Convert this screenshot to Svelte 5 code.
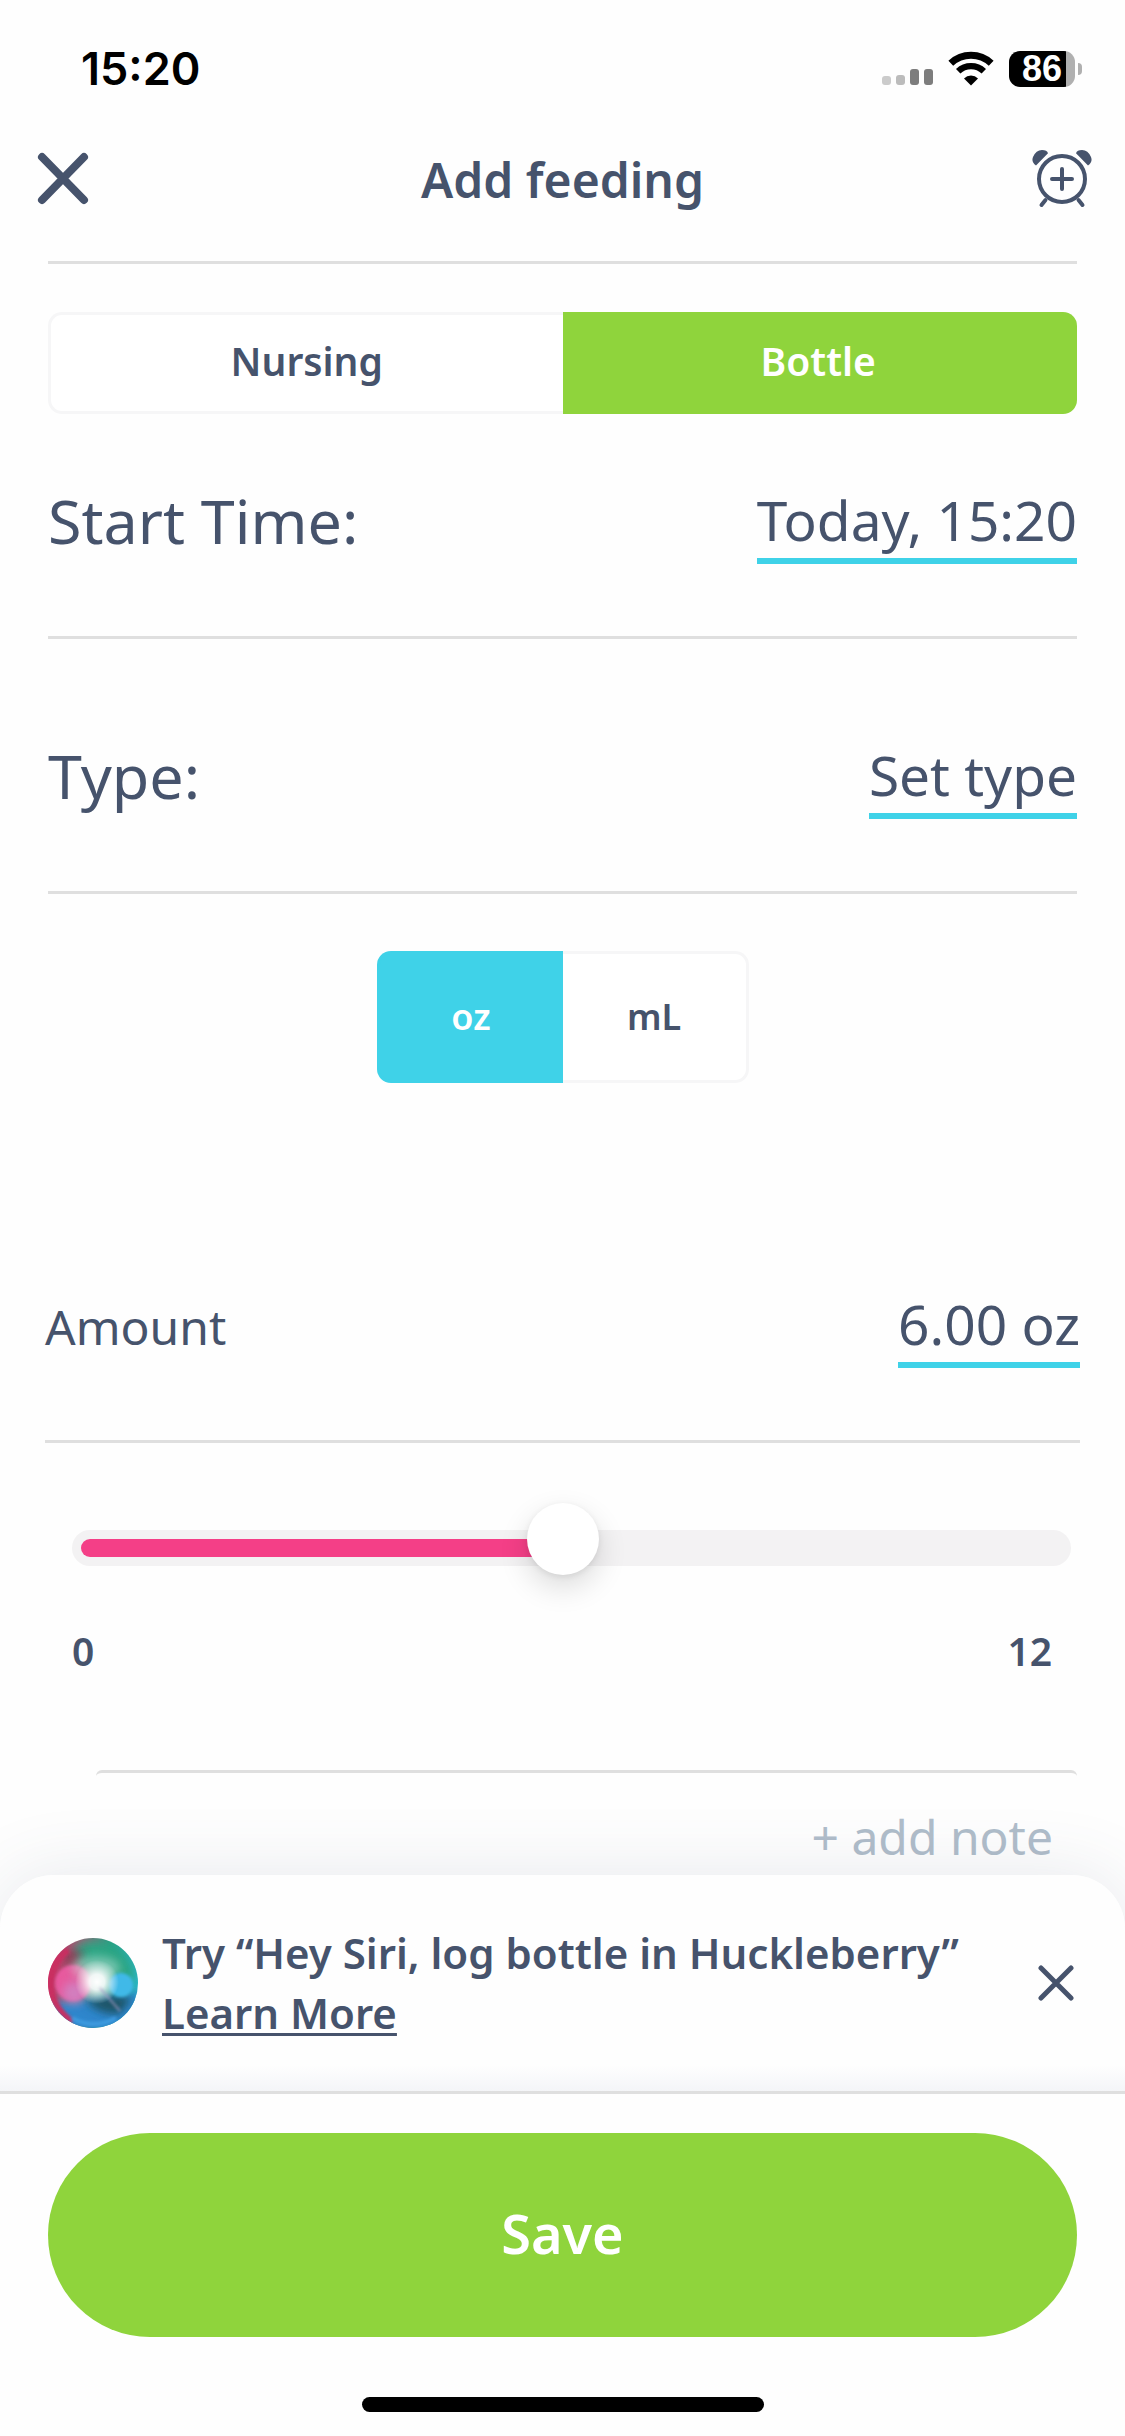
<script>
  let mode = $state('Bottle');
  let unit = $state('oz');
  let amount = $state(6);
  let siriOpen = $state(true);
  const max = 12;
</script>

<div class="screen">
  <div class="status">
    <span class="clock">15:20</span>
    <div class="indicators">
      <svg width="51" height="36" viewBox="0 0 51 36" aria-hidden="true">
        <rect x="0" y="25" width="9" height="9" rx="3" fill="#cbcbcb" />
        <rect x="14" y="24" width="9" height="10" rx="3" fill="#bcbcbc" />
        <rect x="28" y="18" width="9" height="16" rx="3" fill="#7d7d7d" />
        <rect x="42" y="18" width="9" height="16" rx="3" fill="#7d7d7d" />
      </svg>
      <svg class="wifi" width="46" height="36" viewBox="0 0 46 36" aria-hidden="true">
        <path d="M2.8 12.2A29.5 29.5 0 0 1 43.2 12.2" fill="none" stroke="#000" stroke-width="7" />
        <path d="M10.2 20.2A18.6 18.6 0 0 1 35.8 20.2" fill="none" stroke="#000" stroke-width="6.4" />
        <path d="M23 34.5L16 27.4A10 10 0 0 1 30 27.4Z" />
      </svg>
      <div class="battery">
        <span>86</span>
      </div>
      <i class="nub"></i>
    </div>
  </div>

  <header>
    <button class="icon" aria-label="Close">
      <svg width="60" height="58" viewBox="-5 0 60 58">
        <path d="M4 7L46 50M46 7L4 50" fill="none" stroke="#46536c" stroke-width="8" stroke-linecap="round" />
      </svg>
    </button>
    <h1>Add feeding</h1>
    <button class="icon" aria-label="Add reminder">
      <svg width="60" height="58" viewBox="0 0 60 58" fill="none" stroke="#46536c" stroke-width="4" stroke-linecap="round">
        <circle cx="30" cy="29" r="23" />
        <path d="M30 19V39M20 29H40" />
        <path d="M13.5 50L9.5 55M46.5 50L50.5 55" />
        <path d="M4 15.500Q-1 12 1 7Q4 0 10 0Q15 0 16 3.200ZM56 15.500Q61 12 59 7Q56 0 50 0Q45 0 44 3.200Z" fill="#46536c" stroke="none" />
      </svg>
    </button>
  </header>

  <main>
    <div class="segment mode">
      {#each ['Nursing', 'Bottle'] as name}
        <button class:on={mode === name} aria-pressed={mode === name} onclick={() => (mode = name)}>{name}</button>
      {/each}
    </div>

    <div class="row first">
      <span class="label">Start Time:</span>
      <button class="value">Today, 15:20</button>
    </div>
    <div class="row">
      <span class="label">Type:</span>
      <button class="value">Set type</button>
    </div>

    <div class="segment unit">
      {#each ['oz', 'mL'] as name}
        <button class:on={unit === name} aria-pressed={unit === name} onclick={() => (unit = name)}>{name}</button>
      {/each}
    </div>

    <section>
      <div class="amount">
        <label for="amount">Amount</label>
        <button class="value">{amount.toFixed(2)} {unit}</button>
      </div>
      <div class="slider">
        <div class="track"><div class="fill" style="width: {(amount / max) * 100}%"></div></div>
        <input id="amount" type="range" min="0" {max} step="0.25" bind:value={amount} />
      </div>
      <div class="scale"><span>0</span><span>{max}</span></div>
    </section>

    <div class="note">
      <button>+ add note</button>
    </div>
  </main>

  {#if siriOpen}
    <aside>
      <svg class="siri" width="90" height="90" viewBox="0 0 90 90" aria-hidden="true">
        <defs>
          <clipPath id="orb"><circle cx="45" cy="45" r="45" /></clipPath>
          <filter id="soft" x="-50%" y="-50%" width="200%" height="200%"><feGaussianBlur stdDeviation="4" /></filter>
          <filter id="fine" x="-50%" y="-50%" width="200%" height="200%"><feGaussianBlur stdDeviation="1.500" /></filter>
          <linearGradient id="rim" x1="0" y1="0.4" x2="1" y2="0.6">
            <stop offset="0" stop-color="#d42c66" />
            <stop offset="0.3" stop-color="#8c6a78" />
            <stop offset="0.6" stop-color="#27a083" />
            <stop offset="1" stop-color="#2cb6c4" />
          </linearGradient>
          <radialGradient id="glow">
            <stop offset="0" stop-color="#fff" />
            <stop offset="0.35" stop-color="#fff" stop-opacity="0.9" />
            <stop offset="1" stop-color="#fff" stop-opacity="0" />
          </radialGradient>
        </defs>
        <g clip-path="url(#orb)">
          <rect width="90" height="90" fill="url(#rim)" />
          <path d="M26 10Q48 -2 72 14Q88 30 84 42L52 38L28 22Z" fill="#2ba583" filter="url(#soft)" />
          <path d="M4 64Q22 64 45 60L94 54V94H10Z" fill="#2f86cc" filter="url(#soft)" />
          <path d="M38 64Q60 54 84 60L72 76Q54 78 38 64Z" fill="#1f5468" filter="url(#soft)" />
          <path d="M14 18Q24 8 38 16L20 28Z" fill="#8a3550" filter="url(#soft)" opacity="0.8" />
          <path d="M20 12Q-8 36 8 66Q14 76 24 84" fill="none" stroke="#c92d60" stroke-width="6" filter="url(#fine)" />
          <circle cx="25" cy="45" r="18" fill="#ee5ba4" filter="url(#fine)" opacity="0.9" />
          <circle cx="26" cy="55" r="11" fill="#cf86c6" filter="url(#soft)" opacity="0.8" />
          <ellipse cx="48" cy="30" rx="24" ry="12" fill="#cfe8e0" opacity="0.45" filter="url(#soft)" />
          <circle cx="73" cy="47" r="12" fill="#3fb9e8" filter="url(#fine)" />
          <circle cx="49" cy="44" r="22" fill="url(#glow)" />
          <path d="M52 50L72 73" stroke="#a79ac4" stroke-width="2" opacity="0.7" filter="url(#fine)" />
          <path d="M24 80Q45 92 68 80" fill="none" stroke="#3e9be0" stroke-width="4" filter="url(#fine)" />
        </g>
      </svg>
      <p>Try “Hey Siri, log bottle in Huckleberry”<br /><a href="#learn">Learn More</a></p>
      <button class="icon dismiss" aria-label="Dismiss" onclick={() => (siriOpen = false)}>
        <svg width="36" height="36" viewBox="0 0 36 36">
          <path d="M3 3L33 33M33 3L3 33" fill="none" stroke="#46536c" stroke-width="5" stroke-linecap="round" />
        </svg>
      </button>
    </aside>
  {/if}

  <footer>
    <button class="save">Save</button>
    <div class="home"></div>
  </footer>
</div>

<style>
  :global(body) {
    background: #fefefe;
  }
  .screen {
    min-height: 100vh;
    display: flex;
    flex-direction: column;
    overflow: hidden;
    background: #fefefe;
    color: #46536c;
    font-family: 'Noto Sans', sans-serif;
  }
  button {
    margin: 0;
    padding: 0;
    border: 0;
    background: none;
    color: inherit;
    font: inherit;
    cursor: pointer;
  }
  svg {
    display: block;
  }
  .status {
    display: flex;
    justify-content: space-between;
    align-items: center;
    padding: 39px 43px 39px 81px;
    color: #000;
    font-family: Inter, sans-serif;
  }
  .clock {
    font-size: 45px;
    line-height: 60px;
    font-weight: 600;
  }
  .indicators {
    display: flex;
    align-items: center;
  }
  .wifi {
    margin: 0 15px;
  }
  .battery {
    width: 66px;
    border-radius: 11px;
    background: linear-gradient(90deg, #000 57px, #b0b0b0 57px);
    color: #fff;
    font-family: 'Liberation Sans', sans-serif;
    font-size: 36px;
    font-weight: 700;
    line-height: 36px;
    text-align: center;
  }
  .nub {
    width: 4px;
    height: 12px;
    margin-left: 3px;
    border-radius: 0 6px 6px 0;
    background: #b0b0b0;
  }
  header {
    display: grid;
    grid-template-columns: 1fr auto 1fr;
    align-items: start;
    padding: 12px 33px 0;
  }
  .icon {
    justify-self: start;
  }
  h1 + .icon {
    justify-self: end;
  }
  h1 {
    margin: 0;
    font-size: 48px;
    line-height: 60px;
    font-weight: 600;
  }
  main {
    flex: 1;
    margin: 51px 48px 0;
    border-top: 3px solid #dfdfdf;
  }
  .segment {
    display: grid;
    grid-template-columns: 1fr 1fr;
    font-weight: 600;
  }
  .segment button {
    border: 3px solid #f6f6f7;
    background: #fff;
  }
  .segment button:first-child {
    border-right: 0;
    border-radius: 14px 0 0 14px;
  }
  .segment button:last-child {
    border-left: 0;
    border-radius: 0 14px 14px 0;
  }
  .mode {
    margin-top: 48px;
    font-size: 39px;
    line-height: 92px;
  }
  .mode button {
    padding-bottom: 4px;
  }
  .segment .on {
    border-color: #8fd43c;
    background: #8fd43c;
    color: #fff;
  }
  .row,
  .amount {
    display: flex;
    justify-content: space-between;
    align-items: flex-end;
    border-bottom: 3px solid #dfdfdf;
  }
  .row {
    padding: 102px 0 72px;
  }
  .first {
    padding-top: 72px;
  }
  .label {
    padding-bottom: 8px;
    font-size: 61px;
    line-height: 70px;
  }
  .value {
    padding-bottom: 4px;
    border-bottom: 6px solid #3fd2e8;
    font-size: 55px;
    line-height: 68px;
  }
  .segment.unit {
    width: 372px;
    margin: 57px auto 0;
    font-size: 36px;
    line-height: 126px;
  }
  .unit .on {
    border-color: #3fd2e8;
    background: #3fd2e8;
  }
  section {
    margin: 207px -3px 0;
  }
  .amount {
    padding-bottom: 72px;
    font-size: 48px;
    line-height: 70px;
  }
  .amount label {
    padding-bottom: 6px;
  }
  .slider {
    position: relative;
    padding: 87px 9px 0 27px;
  }
  .track {
    padding: 9px;
    border-radius: 18px;
    background: #f3f2f3;
  }
  .fill {
    height: 18px;
    border-radius: 9px;
    background: #f43f87;
  }
  input {
    position: absolute;
    left: 0;
    bottom: -9px;
    width: 100%;
    height: 72px;
    margin: 0;
    background: none;
    appearance: none;
    -webkit-appearance: none;
  }
  /* The thumb rides above the middle of the track. */
  .slider input {
    bottom: -9px;
  }
  input::-webkit-slider-thumb {
    width: 72px;
    height: 72px;
    border-radius: 50%;
    background: #fff;
    box-shadow: 0 12px 30px rgba(0, 0, 0, 0.14), 0 2px 6px rgba(0, 0, 0, 0.08);
    appearance: none;
    -webkit-appearance: none;
  }
  .scale {
    display: flex;
    justify-content: space-between;
    padding: 55px 28px 2px 27px;
    font-size: 39px;
    line-height: 60px;
    font-weight: 600;
  }
  .note {
    margin: 87px 0 0 48px;
    padding: 26px 24px 0 0;
    border-top: 3px solid #dfdfdf;
    border-radius: 6px 6px 0 0;
    text-align: right;
    color: #b0bdca;
    font-size: 48px;
    line-height: 76px;
  }
  aside {
    position: relative;
    display: flex;
    align-items: center;
    gap: 24px;
    padding: 48px 51px 48px 48px;
    border-radius: 54px 54px 0 0;
    background: linear-gradient(#fefefe 88%, #f4f5f8);
    box-shadow: 0 0 72px rgba(70, 83, 118, 0.13);
  }
  .dismiss {
    align-self: center;
  }
  p {
    flex: 1;
    margin: 0;
    font-size: 42px;
    line-height: 60px;
    font-weight: 600;
  }
  a {
    color: inherit;
    text-decoration-thickness: 3px;
    text-underline-offset: 4px;
  }
  footer {
    position: relative;
    padding: 39px 48px 24px;
    border-top: 3px solid #dfdfdf;
    background: #fefefe;
  }
  .save {
    display: block;
    width: 100%;
    padding-bottom: 4px;
    border-radius: 102px;
    background: #8fd43c;
    color: #fff;
    font-size: 54px;
    line-height: 200px;
    font-weight: 600;
  }
  .home {
    width: 402px;
    height: 15px;
    margin: 60px auto 0;
    border-radius: 8px;
    background: #000;
  }
</style>
